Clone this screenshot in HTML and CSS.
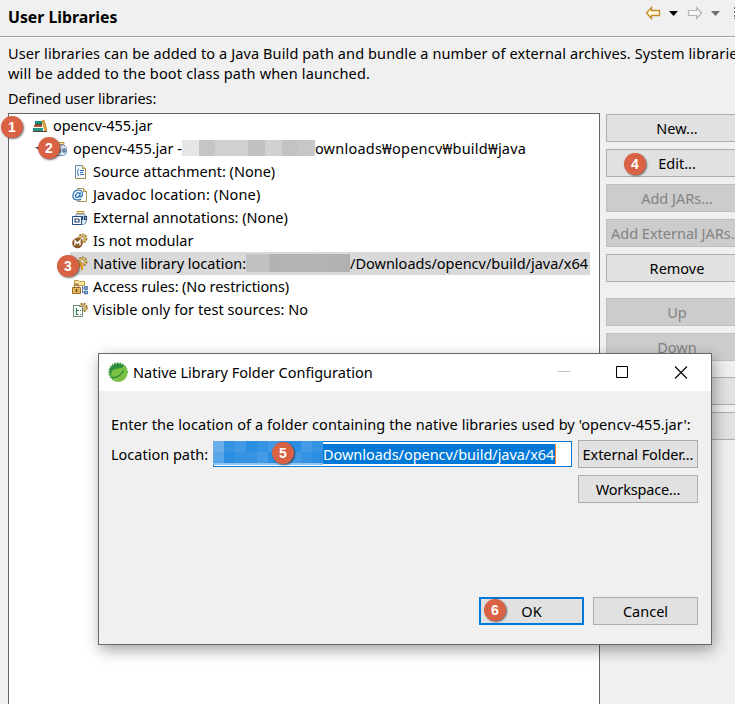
FILE: index.html
```html
<!DOCTYPE html>
<html lang="en">
<head>
<meta charset="utf-8">
<title>User Libraries</title>
<link rel="stylesheet" href="styles.css">
</head>
<body>
<div class="page">
  <header class="header">
    <h1>User Libraries</h1>
    <svg class="nav" width="92" height="16" viewBox="0 0 92 16">
      <path d="M1.5 7 L6.5 1.5 V4.5 H14.5 V9.5 H6.5 V12.5 Z" fill="#fff8d8" stroke="#c08a28" stroke-width="1.3"/>
      <path d="M24 5 H33 L28.500 10 Z" fill="#000"/>
      <path d="M56.500 7 L51.500 1.500 V4.500 H43.500 V9.500 H51.500 V12.500 Z" fill="#f7f7f7" stroke="#b4b4b4" stroke-width="1.2"/>
      <path d="M66 5 H75 L70.500 10 Z" fill="#6b6e72"/>
      <path d="M89 1h2v2h-2zM89 5h2v2h-2zM89 9h2v2h-2zM89 12h2v1h-2z" fill="#777"/>
    </svg>
  </header>
  <div class="intro">
    <div class="l1">User libraries can be added to a Java Build path and bundle a number of external archives. System libraries</div>
    <div class="l2">will be added to the boot class path when launched.</div>
    <div class="l3">Defined user libraries:</div>
  </div>
  <main class="main">
    <div class="tree">
      <div class="row root">
        <svg width="16" height="16" viewBox="0 0 16 16"><path d="M3 3h7v3H3z" fill="#178a7c"/><path d="M2 7h8v2H2z" fill="#b4532d"/><path d="M1 10h10v3H1z" fill="#24978a"/><path d="M3 6.500h7M1 13.500h14" stroke="#4d4429"/><path d="M10 3l2-1 3 10-2 1z" fill="#e9a834" stroke="#a96b1a" stroke-width=".6"/></svg>
        <span class="t1">opencv-455.jar</span>
      </div>
      <div class="row jar">
        <svg width="16" height="16" viewBox="0 0 16 16"><path d="M4 1.500h8v2H4z" fill="#fff0a0" stroke="#bd9232"/><path d="M4 4h8q3 2 2.500 6q0 4-3 4.500H4q-3-1-2.500-5Q1.500 5 4 4z" fill="#dde9f7" stroke="#7590b4"/><path d="M8 8v4M11 8h2v3h-2z" fill="none" stroke="#2e4d7e"/></svg>
        <span class="t2">opencv-455.jar -</span><span class="mosaic m1"><i></i><i></i><i></i><i></i><i></i><i></i><i></i><i></i></span><span class="t2b">ownloads₩opencv₩build₩java</span>
      </div>
      <div class="row">
        <svg width="16" height="16" viewBox="0 0 16 16"><path d="M3.500 1.500h7l3 3v10h-10z" fill="#f3f8fd" stroke="#a08b4b"/><path d="M3.500 14V1.500H10" fill="none" stroke="#6b8db7"/><path d="M10.500 1.500v3h3" fill="#f1dfac" stroke="#b49645"/><path d="M7 5q-1 0-1 1.500T5 8q1 0 1 2t1 2M8 6.500h4M8 8.500h3M8 10.500h4" fill="none" stroke="#336fae"/></svg>
        <span class="t3">Source attachment: (None)</span>
      </div>
      <div class="row">
        <svg width="16" height="16" viewBox="0 0 16 16"><path d="M5.500 1.500h6l3 3v10h-9z" fill="#fff" stroke="#ad934c"/><path d="M11.500 1.500v3h3" fill="#f1dfac" stroke="#b49645"/><circle cx="6" cy="8" r="5.500" fill="#eef5fd"/><path d="M8.500 5.500L7.500 9.500q2 1 3-1.500Q11 3 6.500 3T1 8t5 5q2 0 3-1M7.500 6.500q-2-2-3.500 1t1 3q2 0 3-3" fill="none" stroke="#2872b5" stroke-width="1.200"/></svg>
        <span class="t4">Javadoc location: (None)</span>
      </div>
      <div class="row">
        <svg width="16" height="16" viewBox="0 0 16 16"><path d="M5 1.500h7v2H5z" fill="#fff0a0" stroke="#bd9232"/><path d="M5 4h7q3 2 2.500 6q0 4-3 4.500H5q-2-3-2.500-6Q2.500 5 5 4z" fill="#dde9f7" stroke="#7590b4"/><path d="M.5 6.500h9v8h-9z" fill="#fff" stroke="#254d80"/><path d="M7 9H3v3h4V9M10.500 6v4M12.500 6.500h2v3h-2z" fill="none" stroke="#25466f" stroke-width="1.200"/></svg>
        <span class="t5">External annotations: (None)</span>
      </div>
      <div class="row">
        <svg width="16" height="16" viewBox="0 0 16 16"><circle cx="10.500" cy="5.500" r="4" fill="#eed58d" stroke="#a2813c" stroke-width="2" stroke-dasharray="2 1"/><circle cx="10.500" cy="5.500" r="1.700" fill="#fff" stroke="#9c7b38"/><circle cx="5.500" cy="10" r="5.300" fill="#8b572a"/><path d="M3 12.500v-5l2.500 3 2.500-3v5" fill="none" stroke="#fff" stroke-width="1.300"/></svg>
        <span class="t6">Is not modular</span>
      </div>
      <div class="row selected">
        <svg width="16" height="16" viewBox="0 0 16 16"><circle cx="10.500" cy="5.500" r="4" fill="#eed58d" stroke="#a2813c" stroke-width="2" stroke-dasharray="2 1"/><circle cx="10.500" cy="5.500" r="1.700" fill="#fff" stroke="#9c7b38"/><path d="M7 8q4 2 3 6M9 7q-3 3-4 7" fill="none" stroke="#e79a23" stroke-width="2"/></svg>
        <span class="t7">Native library location:</span><span class="mosaic m2"></span><span class="t7b">/Downloads/opencv/build/java/x64</span>
      </div>
      <div class="row">
        <svg width="16" height="16" viewBox="0 0 16 16"><path d="M2.500 1.500h4l1 1h5v4h-10z" fill="#fce6a4" stroke="#c69a42"/><path d="M10.500 7v7M10.500 9h3M10.500 13h3" fill="none" stroke="#57789f"/><path d="M12.500 7.500h3v3h-3zM12.500 12h3v3h-3z" fill="#77a1d3" stroke="#3b659a" stroke-width=".7"/><path d="M2.500 9V7.500q0-2.500 2-2.500t2 2.500V9" fill="none" stroke="#a28244" stroke-width="1.300"/><path d="M.5 8.500h8v6h-8z" fill="#e3b65a" stroke="#9a6d26"/><path d="M4.500 10v3" stroke="#69451b" stroke-width="1.500"/></svg>
        <span class="t8">Access rules: (No restrictions)</span>
      </div>
      <div class="row">
        <svg width="16" height="16" viewBox="0 0 16 16"><circle cx="11" cy="5.500" r="3.800" fill="#eed58d" stroke="#a2813c" stroke-width="2" stroke-dasharray="2 1"/><circle cx="11" cy="5.500" r="1.500" fill="#fff" stroke="#9c7b38"/><path d="M1.500 3.500h6v1h3v10h-9z" fill="#fff" stroke="#6e8579"/><path d="M4.500 6v6.500h2M4 8.500h3M8 8.500h1M8 12.500h1" fill="none" stroke="#268345" stroke-width="1.200"/></svg>
        <span class="t9">Visible only for test sources: No</span>
      </div>
    </div>
    <div class="side">
      <div class="btn">New...</div>
      <div class="btn">Edit...</div>
      <div class="btn off">Add JARs...</div>
      <div class="btn off addx">Add External JARs...</div>
      <div class="btn">Remove</div>
      <div class="btn off gap">Up</div>
      <div class="btn off">Down</div>
      <div class="btn gap"></div>
      <div class="btn"></div>
    </div>
  </main>

  <section class="dialog">
    <div class="titlebar">
      <svg class="leaf" width="20" height="20" viewBox="0 0 20 20"><circle cx="10" cy="10" r="8.800" fill="#2f8f3e"/><circle cx="10" cy="10" r="9.200" fill="none" stroke="#3d9b3f" stroke-width="1.200" stroke-dasharray="1.500 1.300"/><path d="M17.500 3.500Q14 6.500 9.500 6.500Q3 7.500 3 12.500Q3 16 6 18.500Q12 21.500 17 17Q21.500 11.500 17.500 3.500Z" fill="#7ac143"/><path d="M3.500 15.500Q12 16 15.500 8.500" fill="none" stroke="#2c873a" stroke-width="1.300"/></svg>
      <span class="title">Native Library Folder Configuration</span>
      <svg class="winctl" width="132" height="14" viewBox="0 0 132 14"><path d="M0 6.500h12" stroke="#c5c5c5"/><path d="M58.500 1.500h11v11h-11z" fill="none" stroke="#000"/><path d="M117 1.500l12 12M129 1.500l-12 12" stroke="#000" stroke-width="1.100"/></svg>
    </div>
    <div class="content">
      <div class="prompt">Enter the location of a folder containing the native libraries used by 'opencv-455.jar':</div>
      <div class="field">
        <label>Location path:</label>
        <div class="input"><span class="mosaic m3"><i></i><i></i><i></i><i></i><i></i><i></i><i></i><i></i><i></i><i></i><i></i><i></i><i></i><i></i><i></i><i></i><i></i><i></i><i></i><i></i></span><span class="sel"><span class="t10">Downloads/opencv/build/java/x64</span></span></div>
        <div class="btn ext">External Folder...</div>
      </div>
      <div class="btn work">Workspace...</div>
      <div class="actions"><div class="btn ok">OK</div><div class="btn cancel">Cancel</div></div>
    </div>
  </section>

  <svg class="expander" width="6" height="6" viewBox="0 0 6 6"><path d="M0 0h6v5z" fill="#404040"/></svg>
  <b class="badge b1">1</b><b class="badge b2">2</b><b class="badge b3">3</b><b class="badge b4">4</b><b class="badge b5">5</b><b class="badge b6">6</b>
</div>
</body>
</html>
```
FILE: styles.css
```css
* { box-sizing: border-box; }
body { margin: 0; }
.page {
  position: relative; width: 735px; height: 704px; overflow: hidden;
  background: #f0f0f0; color: #000;
  font: 14.5px/20px "Noto Sans", "Noto Sans CJK KR", sans-serif;
  white-space: nowrap;
}
.header { height: 37px; display: flex; justify-content: space-between; border-bottom: 1px solid #a0a0a0; box-shadow: 0 1px #fff; padding: 6px 0 0 8px; }
h1 { margin: 0; font-size: 15.8px; line-height: 22px; font-weight: 700; }
.nav { flex: none; margin-right: -2px; }
.intro { padding: 6px 0 0 8px; height: 76px; }
.l1 { letter-spacing: .11px; }
.l2 { letter-spacing: .18px; }
.l3 { margin-top: 5px; letter-spacing: -.08px; }
.main { display: flex; gap: 6px; padding-left: 8px; height: 600px; }
.tree { width: 592px; flex: none; background: #fff; border: 1px solid #646464; }
.row { display: flex; align-items: center; height: 23px; margin-left: 61px; padding-left: 2px; }
.row svg { flex: none; margin-right: 5px; }
.row span { margin-bottom: 2px; }
.root { margin-left: 21px; }
.jar { margin-left: 41px; }
.selected { background: #d9d9d9; width: 520px; }
.mosaic { flex: none; display: grid; }
.m1 { width: 133px; height: 16px; grid-template-columns: repeat(8, 1fr); }
.m1 i { background: #d0d1d0; }
.m1 i:nth-child(1) { background: #e7e6e5; }
.m1 i:nth-child(2) { background: #c4c6c6; }
.m1 i:nth-child(5) { background: #c2c2c3; }
.m1 i:nth-child(7) { background: #c5c3c2; }
.m1 i:nth-child(8) { background: #c5c7c9; }
.t1 { letter-spacing: -.07px; }
.t2b { letter-spacing: .23px; }
.t4 { letter-spacing: .16px; }
.t8 { letter-spacing: -.1px; }
.t9 { letter-spacing: .06px; }
.m2 { width: 104px; height: 18px; background: linear-gradient(90deg, #c2c2c2 0 22%, #b2b2b1 23%, #b5b5b5 65%, #b0b0b0); }
.side { width: 142px; flex: none; padding-top: 1px; display: flex; flex-direction: column; gap: 7px; }
.btn { height: 28px; flex: none; border: 1px solid #adadad; background: #e1e1e1; text-align: center; line-height: 27px; }
.off { background: #ccc; border-color: #bfbfbf; color: #838383; }
.addx { text-align: left; padding-left: 4px; }
.gap { margin-top: 9px; }
.dialog { position: absolute; left: 98px; top: 353px; width: 614px; height: 292px; background: #f0f0f0; border: 1px solid #686868; box-shadow: 2px 5px 14px rgba(0,0,0,.36); }
.titlebar { height: 37px; background: #fff; display: flex; align-items: center; padding: 0 21px 0 9px; }
.leaf, .winctl { margin-bottom: 1px; }
.title { margin-left: 5px; margin-bottom: 2px; }
.winctl { margin-left: auto; }
.content { padding: 23px 13px 0 12px; display: flex; flex-direction: column; }
.prompt { letter-spacing: .09px; }
.field { display: flex; align-items: center; margin-top: 6px; height: 28px; }
.field label { width: 102px; flex: none; }
.input { width: 359px; height: 26px; flex: none; background: #fff; border: 1px solid #0078d7; display: flex; margin-right: 6px; }
.m3 { width: 110px; height: 24px; margin-top: -1px; margin-left: -1px; grid-template-columns: repeat(10, 1fr); border-bottom: 2px solid #8fc2ed; }
.m3 i { background: #3693e2; }
.m3 i:nth-child(3n) { background: #439be5; }
.m3 i:nth-child(4n) { background: #2b8ee0; }
.m3 i:nth-child(1) { background: #6baee9; }
.m3 i:nth-child(11) { background: #58a5e8; }
.sel { height: 20px; width: 233px; margin-top: 2px; background: #0078d7; color: #fff; border-right: 1px solid #ff8728; line-height: 21px; letter-spacing: -.04px; }
.ext, .work { width: 120px; }
.ext { letter-spacing: -.08px; }
.work { align-self: flex-end; margin-top: 7px; letter-spacing: -.15px; }
.actions { display: flex; justify-content: flex-end; gap: 9px; margin-top: 94px; }
.ok, .cancel { width: 105px; }
.ok { border: 2px solid #0078d7; line-height: 25px; }
.expander { position: absolute; left: 35px; top: 147px; }
.badge { position: absolute; width: 22px; height: 22px; border-radius: 50%; background: #d96245; color: #fff; font: 700 14px/22px "Liberation Sans", sans-serif; text-align: center; box-shadow: 1px 1px 2px rgba(0,0,0,.55); }
.b1 { left: 1px; top: 116px; }
.b2 { left: 38px; top: 137px; }
.b3 { left: 57px; top: 255px; }
.b4 { left: 624px; top: 153px; }
.b5 { left: 272px; top: 442px; }
.b6 { left: 484px; top: 599px; }
```
